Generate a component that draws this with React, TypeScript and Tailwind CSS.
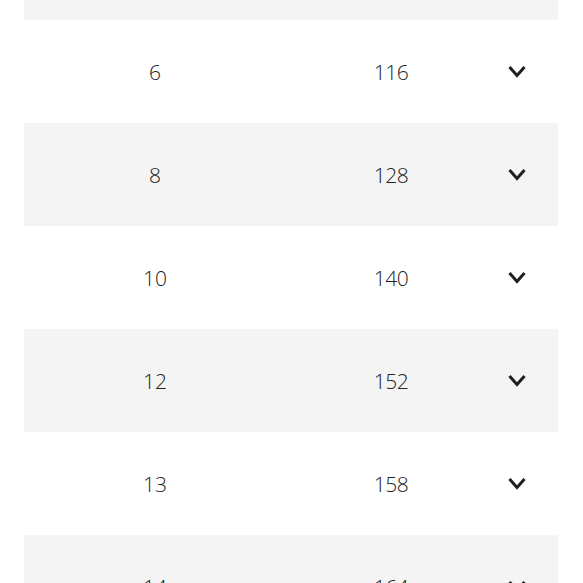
import React from "react";

const rows = [
  ["", ""],
  ["6", "116"],
  ["8", "128"],
  ["10", "140"],
  ["12", "152"],
  ["13", "158"],
  ["14", "164"],
];

function Chevron() {
  return (
    <svg width="20" height="13" viewBox="0 0 20 13" fill="none">
      <polyline points="2.5,2 10,10.5 17.5,2" stroke="#1f1f1f" strokeWidth="3" strokeLinecap="butt" strokeLinejoin="miter" />
    </svg>
  );
}

export default function App() {
  return (
    <div className="w-[583px] h-[583px] overflow-hidden bg-white" style={{ fontFamily: '"Open Sans", "Noto Sans", sans-serif' }}>
      <div className="ml-[24px] w-[534px] -mt-[83px] flex flex-col">
        {rows.map(([a, b], i) => (
          <div
            key={i}
            className={`h-[103px] flex items-center text-[21px] font-light text-[#222] ${i % 2 === 0 ? "bg-[#f4f4f4]" : "bg-white"}`}
          >
            {i === 0 ? null : (
              <>
                <div className="w-[262px] text-center pt-[2px]">{a}</div>
                <div className="w-[210px] text-center pt-[2px] tracking-[-0.5px]">{b}</div>
                <div className="pl-[11px] flex items-center">
                  <Chevron />
                </div>
              </>
            )}
          </div>
        ))}
      </div>
    </div>
  );
}
